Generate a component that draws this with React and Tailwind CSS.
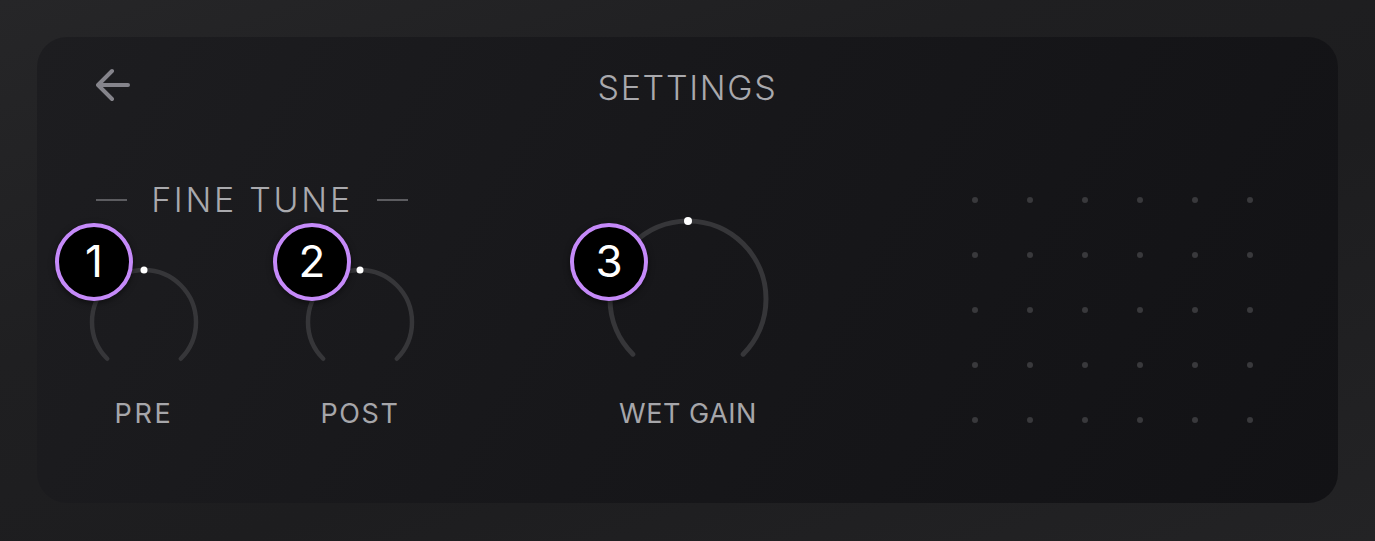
import React from "react";

const font = { fontFamily: "Inter, 'Noto Sans', sans-serif" };

function Badge({ n, className }) {
  return (
    <div
      className={`absolute w-[78px] h-[78px] rounded-full bg-black border-[4px] border-[#c58af9] flex items-center justify-center text-white text-[44px] leading-none shadow-[0_2px_6px_rgba(0,0,0,0.5)] ${className}`}
    >
      <span className="-mt-[2px]">{n}</span>
    </div>
  );
}

function SmallKnob({ n, label, badgeClass, track }) {
  return (
    <div className="relative flex flex-col items-center w-[116px]">
      <svg width="116" height="116" viewBox="0 0 116 116">
        <path
          d="M21.23 94.77 A52 52 0 1 1 94.77 94.77"
          fill="none"
          stroke="#363639"
          strokeWidth="4.5"
          strokeLinecap="round"
        />
        <circle cx="58" cy="6" r="3.5" fill="#fff" />
      </svg>
      <Badge n={n} className={badgeClass} />
      <div className={`mt-[19px] h-[30px] leading-[30px] text-[27px] text-[#a6a6aa] ${track}`}>{label}</div>
    </div>
  );
}

export default function App() {
  const rows = [0, 1, 2, 3, 4];
  const cols = [0, 1, 2, 3, 4, 5];
  return (
    <div
      style={font}
      className="w-full h-[541px] p-[37px] bg-[linear-gradient(160deg,#262628_0%,#1f1f21_35%,#1d1d1f_60%,#232325_100%)]"
    >
      <div className="w-full h-[466px] rounded-[30px] bg-[linear-gradient(120deg,#1d1d20_0%,#17171a_50%,#121215_100%)] overflow-hidden">
        <div className="grid grid-cols-[1fr_auto_1fr] items-center px-[60px] pt-[27px] h-[75px]">
          <svg width="34" height="34" viewBox="0 0 34 34" className="-ml-[1px] mb-[6px]">
            <path
              d="M32 17 H3 M16 3 L2 17 L16 31"
              fill="none"
              stroke="#85848b"
              strokeWidth="4"
              strokeLinecap="round"
              strokeLinejoin="round"
            />
          </svg>
          <div className="text-[34px] font-light tracking-[0.05em] text-[#a9a9ad] leading-none">SETTINGS</div>
          <div />
        </div>

        <div className="flex items-start pl-[49px] mt-[70px]">
          <div className="flex flex-col items-center">
            <div className="flex items-center gap-[24px] h-[36px]">
              <div className="w-[31px] h-[2px] bg-[#5c5c60]" />
              <div className="text-[34px] font-light tracking-[0.08em] text-[#a9a9ad] leading-none">FINE TUNE</div>
              <div className="w-[31px] h-[2px] bg-[#5c5c60]" />
            </div>
            <div className="flex gap-[100px] mt-[46px]">
              <SmallKnob n="1" label="PRE" track="tracking-[0.1em]" badgeClass="-left-[31px] -top-[41px]" />
              <SmallKnob n="2" label="POST" track="tracking-[0.06em]" badgeClass="-left-[29px] -top-[41px]" />
            </div>
          </div>

          <div className="relative flex flex-col items-center w-[168px] ml-[186px] mt-[33px]">
            <svg width="168" height="168" viewBox="0 0 168 168">
              <path
                d="M28.85 139.15 A78 78 0 1 1 139.15 139.15"
                fill="none"
                stroke="#363639"
                strokeWidth="5"
                strokeLinecap="round"
              />
              <circle cx="84" cy="6" r="4" fill="#fff" />
            </svg>
            <Badge n="3" className="-left-[34px] top-[8px]" />
            <div className="mt-[16px] h-[30px] leading-[30px] text-[27px] tracking-[0.02em] text-[#a6a6aa] whitespace-nowrap">
              WET GAIN
            </div>
          </div>

          <div className="flex flex-col gap-[49px] ml-[200px] mt-[15px]">
            {rows.map((r) => (
              <div key={r} className="flex gap-[49px]">
                {cols.map((c) => (
                  <div key={c} className="w-[6px] h-[6px] rounded-full bg-[#39393c]" />
                ))}
              </div>
            ))}
          </div>
        </div>
      </div>
    </div>
  );
}
